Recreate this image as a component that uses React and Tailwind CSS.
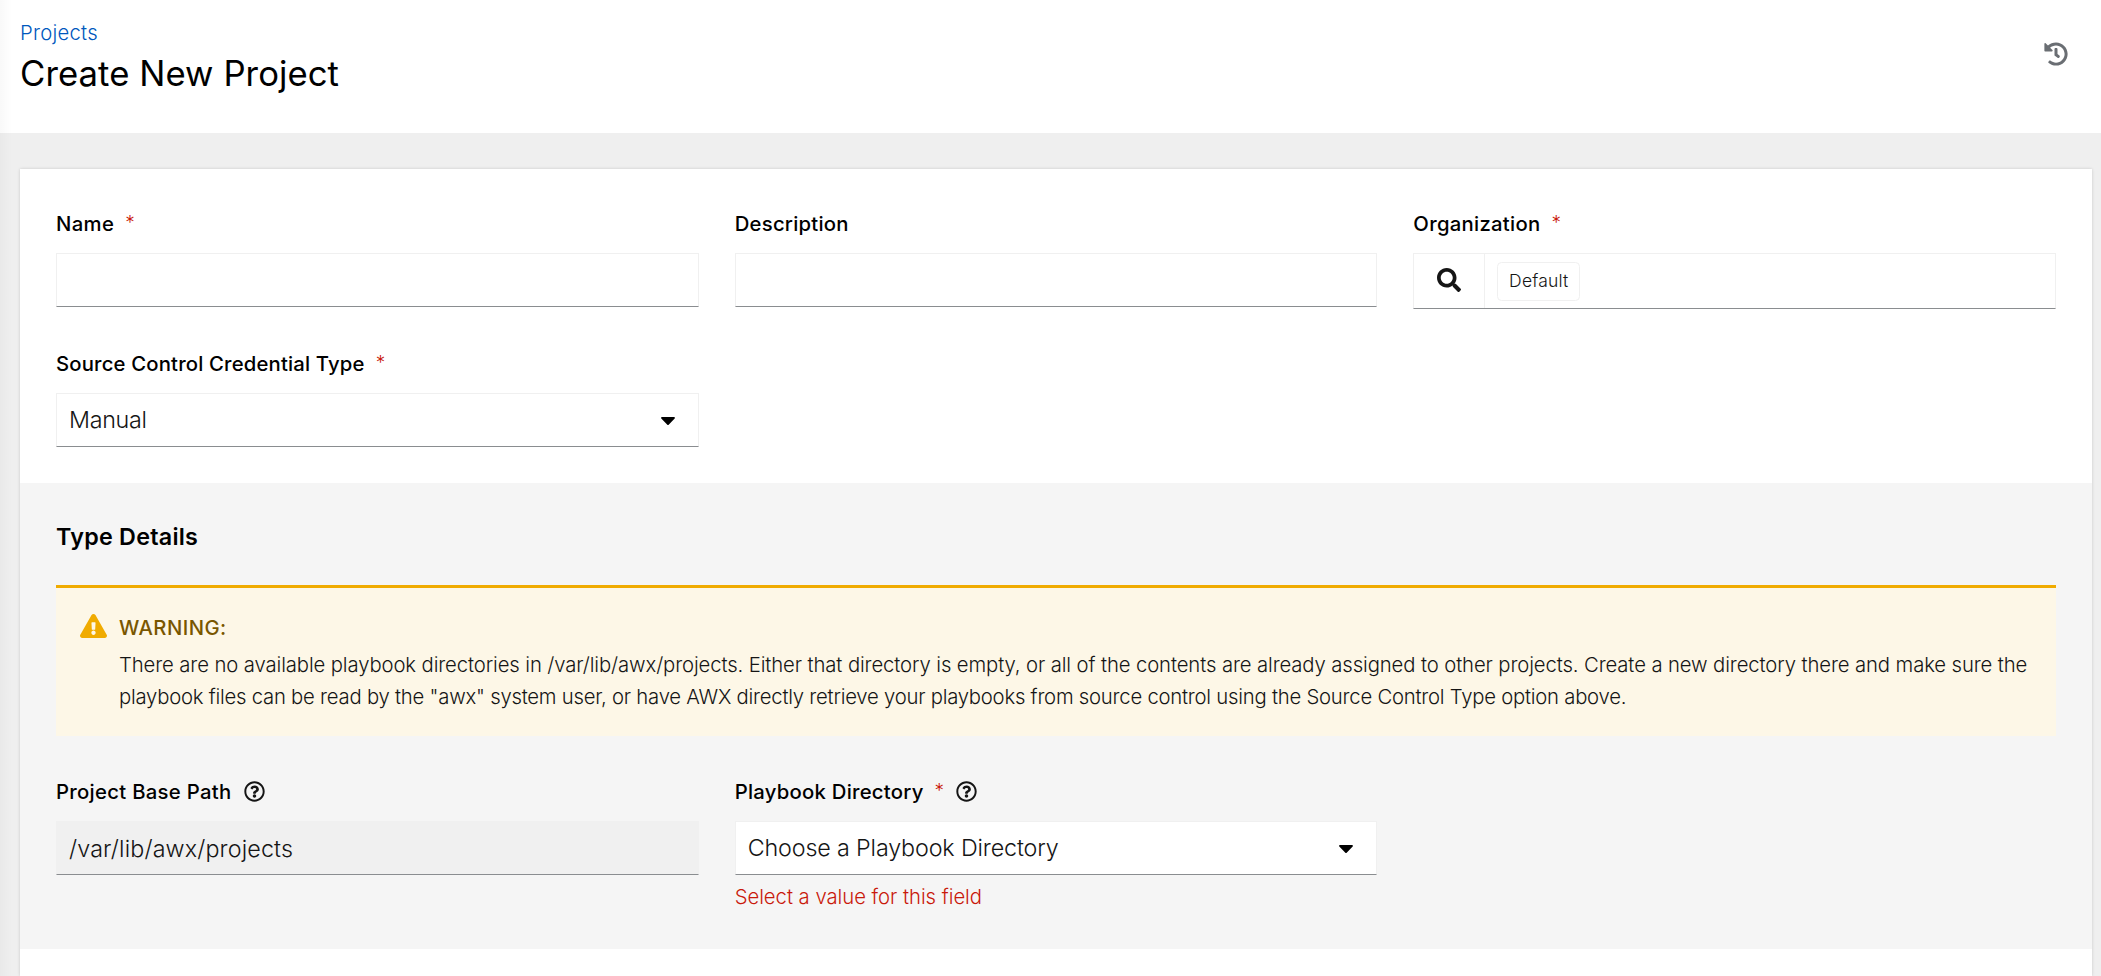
import {
  FaCaretDown,
  FaExclamationTriangle,
  FaHistory,
  FaRegQuestionCircle,
  FaSearch,
} from 'react-icons/fa';

const box = 'flex items-center border border-[#f0f0f0] border-b-[#8a8d90]';

function Label({ text, tracking, required, help }) {
  return (
    <div className="flex h-9 items-center text-[20.3px] font-medium text-black">
      <span className={`${tracking} pt-[3px]`}>{text}</span>
      {required && (
        <span className="ml-[11px] -mt-[1px] text-[19px] font-light leading-none text-[#c9190b]">*</span>
      )}
      {help && <FaRegQuestionCircle className="ml-[12px] mt-px size-[21px] text-[#151515]" />}
    </div>
  );
}

function Select({ text, tracking }) {
  return (
    <div className={`${box} h-[54px] justify-between bg-white pl-3 pr-[18px] text-[23.3px] font-light text-[#151515]`}>
      <span className={tracking}>{text}</span>
      <FaCaretDown className="size-6 text-black" />
    </div>
  );
}

export default function App() {
  return (
    <div className="relative flex h-[976px] w-[2101px] flex-col overflow-hidden bg-[#efefef] font-[Inter,sans-serif] whitespace-nowrap">
      <header className="flex h-[133px] shrink-0 items-start justify-between bg-white pl-5 pr-[33px] pt-[19px]">
        <div>
          <a className="block text-[20.3px] leading-[27px] font-light tracking-[0.25px] text-[#0058bd]">Projects</a>
          <h1 className="mt-[6px] text-[34.7px] leading-[43px] font-normal tracking-[0.06px] text-black">
            Create New Project
          </h1>
        </div>
        <FaHistory className="mt-[23px] size-6 text-[#6a6e73]" />
      </header>

      <main className="ml-5 mr-[9px] mt-9 flex grow flex-col bg-white shadow-[0_0_3px_0px_rgba(3,3,3,0.16)]">
        <div className="grid h-[314px] shrink-0 grid-cols-3 content-start gap-9 p-9">
          <div>
            <Label text="Name" tracking="tracking-[0.35px]" required />
            <div className={`${box} mt-3 h-[54px]`} />
          </div>
          <div>
            <Label text="Description" tracking="tracking-[0.25px]" />
            <div className={`${box} mt-3 h-[54px]`} />
          </div>
          <div>
            <Label text="Organization" tracking="tracking-[0.28px]" required />
            <div className={`${box} mt-3 h-14`}>
              <div className="flex w-[71px] items-center justify-center self-stretch border-r border-[#f0f0f0] pb-[2px]">
                <FaSearch className="size-6 text-[#151515]" />
              </div>
              <div className="ml-3 flex h-[39px] w-[83px] items-center justify-center rounded-[4.5px] border border-[#f0f0f0] text-[17.5px] font-light tracking-[0.2px] text-[#151515]">
                Default
              </div>
            </div>
          </div>
          <div>
            <Label text="Source Control Credential Type" tracking="tracking-[0.17px]" required />
            <div className="mt-3">
              <Select text="Manual" tracking="tracking-[-0.3px]" />
            </div>
          </div>
        </div>

        <section className="h-[466px] shrink-0 bg-[#f5f5f5] p-9">
          <h2 className="text-[23.3px] leading-9 font-semibold tracking-[0.25px] text-black">Type Details</h2>

          <div className="mt-[30px] flex h-[151px] border-t-[3px] border-[#f0ab00] bg-[#fdf7e7] pl-6 pt-6">
            <FaExclamationTriangle className="mt-[2px] h-6 w-[27px] text-[#f0ab00]" />
            <div className="ml-3 text-[20.3px] leading-8">
              <div className="font-medium tracking-[0.43px] text-[#795600]">WARNING:</div>
              <div className="mt-[5px] font-light text-[#151515]">
                <p className="tracking-[-0.11px]">
                  There are no available playbook directories in /var/lib/awx/projects. Either that directory is
                  empty, or all of the contents are already assigned to other projects. Create a new directory there
                  and make sure the
                </p>
                <p className="tracking-[-0.23px]">
                  playbook files can be read by the "awx" system user, or have AWX directly retrieve your playbooks
                  from source control using the Source Control Type option above.
                </p>
              </div>
            </div>
          </div>

          <div className="mt-[37px] grid grid-cols-3 gap-9">
            <div>
              <Label text="Project Base Path" tracking="tracking-[0.3px]" help />
              <div className={`${box} mt-3 h-[54px] bg-[#f0f0f0] pt-[2px] pl-3 text-[23.3px] font-light tracking-[0.14px] text-[#151515]`}>
                /var/lib/awx/projects
              </div>
            </div>
            <div>
              <Label text="Playbook Directory" tracking="tracking-[0.25px]" required help />
              <div className="mt-3">
                <Select text="Choose a Playbook Directory" tracking="tracking-[-0.14px]" />
              </div>
              <p className="mt-[6px] text-[20.3px] leading-8 font-light tracking-[-0.03px] text-[#c9190b]">
                Select a value for this field
              </p>
            </div>
          </div>
        </section>
      </main>
      <div className="pointer-events-none absolute inset-y-0 left-0 w-3 bg-linear-to-r from-black/[0.025] to-transparent" />
    </div>
  );
}
